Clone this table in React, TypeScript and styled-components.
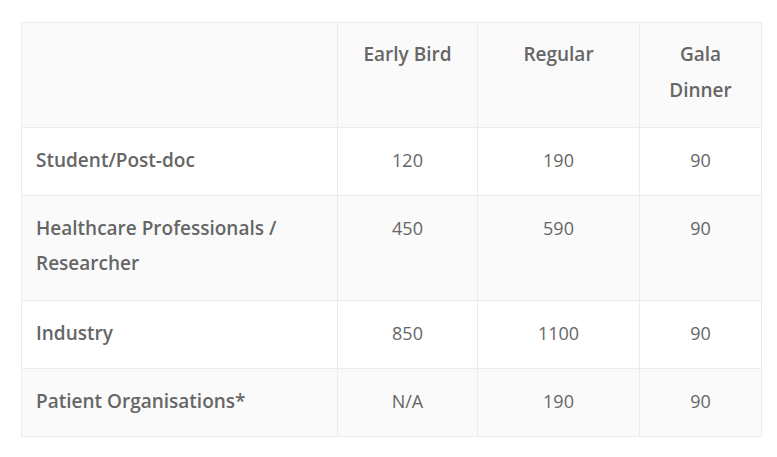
import React from "react";
import styled, { createGlobalStyle } from "styled-components";

const Global = createGlobalStyle`
  html, body { margin: 0; padding: 0; background: #ffffff; }
  body { font-family: "Open Sans", "Liberation Sans", sans-serif; }
`;

const Page = styled.div`
  padding: 22px 16px 0 21px;
  width: 740px;
`;

const Table = styled.table`
  width: 740px;
  border-collapse: collapse;
  border: 1px solid #ececec;
  table-layout: fixed;
  font-family: "Open Sans", "Liberation Sans", sans-serif;
  font-size: 18px;
  line-height: 37px;
  color: #666666;
`;

const Row = styled.tr<{ $shade: boolean }>`
  background: ${(p) => (p.$shade ? "#fafafa" : "#ffffff")};
`;

const HeadCell = styled.th`
  border: 1px solid #ececec;
  padding: 13px 14px 19px;
  font-size: 19px;
  line-height: 36px;
  font-weight: 600;
  text-align: center;
  vertical-align: top;
`;

const LabelCell = styled.td<{ $lines: number }>`
  border: 1px solid #ececec;
  padding: 15px 14px ${(p) => (p.$lines > 1 ? 19 : 17)}px;
  font-size: 19px;
  line-height: 35px;
  font-weight: 600;
  text-align: left;
  vertical-align: top;
`;

const ValueCell = styled.td`
  border: 1px solid #ececec;
  padding: 14px 14px 16px;
  font-weight: 400;
  text-align: center;
  vertical-align: top;
`;

const rows = [
  { label: "Student/Post-doc", lines: 1, early: "120", regular: "190", gala: "90" },
  { label: "Healthcare Professionals / Researcher", lines: 2, early: "450", regular: "590", gala: "90" },
  { label: "Industry", lines: 1, early: "850", regular: "1100", gala: "90" },
  { label: "Patient Organisations*", lines: 1, early: "N/A", regular: "190", gala: "90" },
];

export default function App() {
  return (
    <>
      <Global />
      <Page>
        <Table>
          <colgroup>
            <col style={{ width: 316 }} />
            <col style={{ width: 140 }} />
            <col style={{ width: 162 }} />
            <col style={{ width: 122 }} />
          </colgroup>
          <thead>
            <Row $shade>
              <HeadCell></HeadCell>
              <HeadCell>Early Bird</HeadCell>
              <HeadCell>Regular</HeadCell>
              <HeadCell>Gala Dinner</HeadCell>
            </Row>
          </thead>
          <tbody>
            {rows.map((r, i) => (
              <Row key={r.label} $shade={i % 2 === 1}>
                <LabelCell $lines={r.lines}>{r.label}</LabelCell>
                <ValueCell>{r.early}</ValueCell>
                <ValueCell>{r.regular}</ValueCell>
                <ValueCell>{r.gala}</ValueCell>
              </Row>
            ))}
          </tbody>
        </Table>
      </Page>
    </>
  );
}
